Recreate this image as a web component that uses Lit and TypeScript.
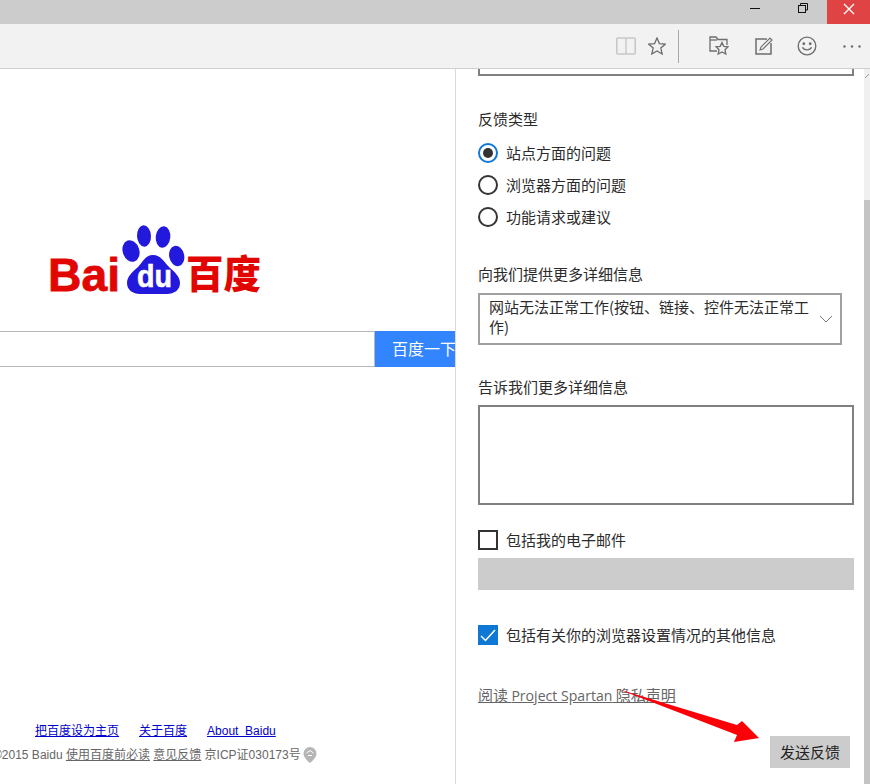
import { LitElement, html, css } from "lit";
import { customElement } from "lit/decorators.js";

@customElement("app-root")
export class AppRoot extends LitElement {
  static styles = css`
    :host { display: block; width: 870px; height: 784px; overflow: hidden; position: relative; background: #fff;
      font-family: "Open Sans", "Noto Sans CJK SC", sans-serif; color: #222; font-size: 15px; }
    * { box-sizing: border-box; }
    .titlebar { height: 24px; background: #cccccc; display: flex; justify-content: flex-end; }
    .winbtn { width: 46px; height: 24px; display: flex; justify-content: center; padding-top: 3px; }
    .min { padding-right: 6px; }
    .rest { padding-right: 2px; }
    .close { width: 43px; background: #e04343; }
    .toolbar { height: 45px; background: #f2f2f2; border-bottom: 1px solid #cfcfcf; display: flex; align-items: center; justify-content: flex-end; padding-right: 9px; }
    .toolbar svg { display: block; flex: none; }
    .i-book, .i-star { margin-right: 12px; }
    .sep { width: 1px; height: 33px; background: #a8a8a8; margin-right: 30px; }
    .i-fold { margin-right: 26px; }
    .i-note { margin-right: 24px; }
    .i-smile { margin-right: 26px; }
    .main { display: flex; height: 715px; }
    .page { flex: none; display: flex; flex-direction: column; overflow: hidden; border-right: 1px solid #d9d9d9; width: 456px; }
    .logo { display: block; flex: none; margin: 155px 0 0 48px; }
    .search { display: flex; height: 36px; margin-top: 31px; flex: none; }
    .input { width: 375px; border: 1px solid #b8b8b8; border-left: 0; background: #fff; }
    .sbtn { width: 80px; background: #3385ff; color: #fff; font: 16px/35px "Noto Sans CJK SC", sans-serif; padding-left: 17px; white-space: nowrap; overflow: hidden; }
    .foot { margin-top: auto; padding-bottom: 19px; font: 12px/20px "Liberation Sans", "Noto Sans CJK SC", sans-serif; }
    .links { display: flex; gap: 20px; padding-left: 35px; margin-bottom: 4px; }
    .links a { color: #0000cc; text-decoration: underline; }
    .copy { color: #666; display: flex; align-items: center; white-space: nowrap; margin-left: -7px; gap: 2px; }
    .copy a { color: #666; text-decoration: underline; }
    .panel { flex: 1; position: relative; padding-left: 22px; overflow: hidden; }
    .ta-top { width: 376px; height: 7px; border: 2px solid #808080; border-top: 0; }
    .lbl { font: 15px/20px "Noto Sans CJK SC", sans-serif; color: #2b2b2b; }
    .type { margin-top: 33px; }
    .radios { margin-top: 14px; display: flex; flex-direction: column; gap: 12px; }
    .opt { display: flex; align-items: center; gap: 8px; height: 20px; font: 15px/20px "Noto Sans CJK SC", sans-serif; color: #2b2b2b; }
    .radio { width: 20px; height: 20px; border-radius: 50%; border: 2px solid #333; flex: none; }
    .radio.on { border-color: #0f78d4; display: flex; align-items: center; justify-content: center; }
    .radio.on::after { content: ""; width: 10px; height: 10px; border-radius: 50%; background: #333; }
    .more { margin-top: 37px; }
    .select { width: 364px; height: 52px; margin-top: 9px; border: 2px solid #a0a0a0; padding: 0 7px 4px 9px; display: flex; justify-content: space-between; align-items: center; font: 15px/20px "Noto Sans CJK SC", sans-serif; color: #2b2b2b; }
    .select span { width: 323px; display: block; }
    .select svg { margin-top: 4px; }
    .tell { margin-top: 32px; }
    .ta { width: 376px; height: 100px; margin-top: 8px; border: 2px solid #808080; }
    .chk { margin-top: 25px; }
    .box { width: 20px; height: 20px; border: 2px solid #333; flex: none; }
    .box.on { background: #0f78d4; border: 0; display: flex; align-items: center; justify-content: center; }
    .email { width: 376px; height: 32px; margin-top: 8px; background: #cccccc; }
    .chk2 { margin-top: 35px; }
    .priv { display: inline-block; margin-top: 40px; font: 15px/20px "Noto Sans CJK SC", sans-serif; color: #666; text-decoration: underline; }
    .lat { font: 14.1px/20px "Open Sans", sans-serif; }
    .track { position: absolute; right: 0; top: 0; bottom: 0; width: 6px; background: #f0f0f0; }
    .thumb { position: absolute; right: 0; top: 131px; bottom: 0; width: 6px; background: #c4c4c4; }
    .up { position: absolute; right: 0; top: 4px; }
    .send { position: absolute; left: 770px; top: 736px; width: 80px; height: 32px; background: #cccccc; color: #222; text-align: center; font: 15px/32px "Noto Sans CJK SC", sans-serif; }
    .arrow { position: absolute; left: 610px; top: 680px; pointer-events: none; }
  `;

  private logo() {
    return html`<svg class="logo" width="222" height="76" viewBox="-2 0 222 76">
      <g fill="#2319dc">
        <ellipse cx="81" cy="27" rx="8.300" ry="11" transform="rotate(-18 81 27)"/>
        <ellipse cx="94" cy="12" rx="7" ry="10.700" transform="rotate(-3 94 12)"/>
        <ellipse cx="113" cy="13" rx="7.300" ry="10.700" transform="rotate(6 113 13)"/>
        <ellipse cx="126.700" cy="32" rx="7.500" ry="10.300" transform="rotate(-12 126.700 32)"/>
        <path d="M103 31c8 0 11 7 16 12 6 5 11 10 11 16 0 7-6 11-13 11H90c-7 0-13-4-13-11 0-6 5-11 11-16 5-5 7-12 15-12z"/>
      </g>
      <text x="87" y="63" fill="#fff" stroke="#fff" stroke-width=".6" font-family="Liberation Sans" font-weight="700" font-size="31" textLength="35" lengthAdjust="spacingAndGlyphs">du</text>
      <text x="-2" y="67" fill="#e10601" stroke="#e10601" stroke-width=".8" font-family="Liberation Sans" font-weight="700" font-size="47" textLength="72" lengthAdjust="spacingAndGlyphs">Bai</text>
      <text x="136" y="64" fill="#e10601" font-family="Noto Sans CJK SC" font-weight="900" font-size="39" textLength="75" lengthAdjust="spacingAndGlyphs">百度</text>
    </svg>`;
  }

  render() {
    const ico = "#6e6e6e";
    return html`
      <div class="titlebar">
        <div class="winbtn min"><svg width="10" height="10" viewBox="0 0 10 10"><path d="M0 5.500h10" stroke="#111" fill="none"/></svg></div>
        <div class="winbtn rest"><svg width="10" height="10" viewBox="0 0 10 10" fill="none" stroke="#111"><path d="M2.500 2.500V.5h7v6.500H7.500"/><rect x=".5" y="2.500" width="7" height="7"/></svg></div>
        <div class="winbtn close"><svg width="12" height="12" viewBox="0 0 12 12"><path d="M1 1l10 10M11 1L1 11" stroke="#fff" stroke-width="1.400" fill="none"/></svg></div>
      </div>
      <div class="toolbar">
        <svg class="i-book" width="20" height="18" viewBox="0 0 20 18" fill="none" stroke="#c8c8c8" stroke-width="1.600"><rect x=".8" y="1" width="18.400" height="16" rx="1"/><path d="M10 1v16" stroke-width="1.400"/></svg>
        <svg class="i-star" width="18" height="18" viewBox="0 0 18 18" fill="none" stroke="${ico}" stroke-width="1.300"><path d="M9 1l2.400 5.600 6 .5-4.600 4 1.400 5.900L9 14l-5.200 3 1.400-5.900-4.600-4 6-.5z"/></svg>
        <div class="sep"></div>
        <svg class="i-fold" width="20" height="20" viewBox="0 0 20 20" fill="none" stroke="${ico}" stroke-width="1.300"><path d="M8 15H1V1h6l2 2.500h9V9"/><path d="M1 4h7"/><path d="M13 6.500l1.800 3.800 4.200.5-3 2.900.8 4.300-3.800-2.100-3.800 2.100.8-4.300-3-2.900 4.200-.5z" fill="#f2f2f2"/></svg>
        <svg class="i-note" width="18" height="18" viewBox="0 0 18 18" fill="none" stroke="${ico}" stroke-width="1.500"><path d="M12 2H1v15h15V6"/><path d="M5 13l1-3 9-9 2 2-9 9z" fill="#f2f2f2" stroke-width="1.100"/></svg>
        <svg class="i-smile" width="20" height="20" viewBox="0 0 22 22" fill="none" stroke="${ico}" stroke-width="1.500"><circle cx="11" cy="11" r="9.700"/><path d="M6 12.500c1.500 3.700 8.500 3.700 10 0"/><circle cx="7.500" cy="8.500" r=".8"/><circle cx="14.500" cy="8.500" r=".8"/></svg>
        <svg width="18" height="3" viewBox="0 0 18 3" fill="#6e6e6e"><circle cx="1.500" cy="1.500" r="1.200"/><circle cx="9" cy="1.500" r="1.200"/><circle cx="16.500" cy="1.500" r="1.200"/></svg>
      </div>
      <div class="main">
        <div class="page">
          ${this.logo()}
          <div class="search"><div class="input"></div><div class="sbtn">百度一下</div></div>
          <div class="foot">
            <div class="links"><a>把百度设为主页</a><a>关于百度</a><a>About&nbsp; Baidu</a></div>
            <div class="copy"><span>©2015 Baidu <a>使用百度前必读</a> <a>意见反馈</a> 京ICP证030173号</span>
              <svg width="14" height="18" viewBox="0 0 14 18"><path d="M7 1a6.500 6.500 0 0 1 6.500 6.500C13.500 12 7 17 7 17S.5 12 .5 7.500A6.500 6.500 0 0 1 7 1z" fill="#b5b5b5"/><path d="M3.500 7L7 4.500 10.500 7M5 9.500h4" stroke="#fff" fill="none"/></svg>
            </div>
          </div>
        </div>
        <div class="panel">
          <div class="ta-top"></div>
          <div class="lbl type">反馈类型</div>
          <div class="radios">
            <div class="opt"><span class="radio on"></span>站点方面的问题</div>
            <div class="opt"><span class="radio"></span>浏览器方面的问题</div>
            <div class="opt"><span class="radio"></span>功能请求或建议</div>
          </div>
          <div class="lbl more">向我们提供更多详细信息</div>
          <div class="select"><span>网站无法正常工作(按钮、链接、控件无法正常工作)</span>
            <svg width="14" height="8" viewBox="0 0 14 8" fill="none" stroke="#777"><path d="M1 1l6 6 6-6"/></svg></div>
          <div class="lbl tell">告诉我们更多详细信息</div>
          <div class="ta"></div>
          <div class="opt chk"><span class="box"></span>包括我的电子邮件</div>
          <div class="email"></div>
          <div class="opt chk2"><span class="box on"><svg width="16" height="13" viewBox="0 0 16 13" fill="none" stroke="#fff" stroke-width="1.500"><path d="M1 7l4.500 4.500L15 1"/></svg></span>包括有关你的浏览器设置情况的其他信息</div>
          <a class="priv">阅读 <span class="lat">Project Spartan</span> 隐私声明</a>
          <div class="track"></div>
          <div class="thumb"></div>
          <svg class="up" width="6" height="6" viewBox="0 0 6 6" fill="none" stroke="#999"><path d="M1 5l4-4"/></svg>
        </div>
      </div>
      <div class="send">发送反馈</div>
      <svg class="arrow" width="160" height="70" viewBox="0 0 160 70"><path d="M8 9L127 45 132 41 149 58 124 62 127 55z" fill="#fb0007"/></svg>
    `;
  }
}
